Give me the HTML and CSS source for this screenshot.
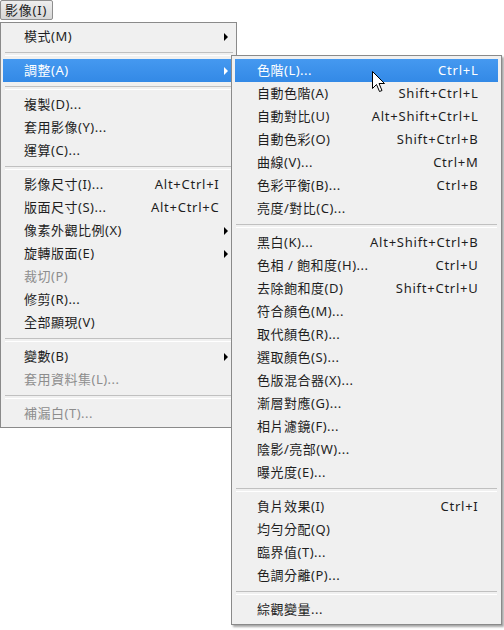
FILE: index.html
```html
<!DOCTYPE html>
<html lang="zh-Hant">
<head>
<meta charset="utf-8">
<title>影像選單</title>
<link rel="stylesheet" href="styles.css">
</head>
<body>
<div class="menubar"><span class="menubar-item">影像(I)</span></div>

<div class="menu main">
  <div class="item"><span class="label">模式(M)</span><span class="arrow-cell"><i class="arrow"></i></span></div>
  <div class="sep"></div>
  <div class="item active"><span class="label">調整(A)</span><span class="arrow-cell"><i class="arrow"></i></span></div>
  <div class="sep"></div>
  <div class="item"><span class="label">複製(D)...</span><span class="arrow-cell"></span></div>
  <div class="item"><span class="label">套用影像(Y)...</span><span class="arrow-cell"></span></div>
  <div class="item"><span class="label">運算(C)...</span><span class="arrow-cell"></span></div>
  <div class="sep"></div>
  <div class="item"><span class="label">影像尺寸(I)...</span><span class="key">Alt+Ctrl+I</span><span class="arrow-cell"></span></div>
  <div class="item"><span class="label">版面尺寸(S)...</span><span class="key">Alt+Ctrl+C</span><span class="arrow-cell"></span></div>
  <div class="item"><span class="label">像素外觀比例(X)</span><span class="arrow-cell"><i class="arrow"></i></span></div>
  <div class="item"><span class="label">旋轉版面(E)</span><span class="arrow-cell"><i class="arrow"></i></span></div>
  <div class="item disabled"><span class="label">裁切(P)</span><span class="arrow-cell"></span></div>
  <div class="item"><span class="label">修剪(R)...</span><span class="arrow-cell"></span></div>
  <div class="item"><span class="label">全部顯現(V)</span><span class="arrow-cell"></span></div>
  <div class="sep"></div>
  <div class="item"><span class="label">變數(B)</span><span class="arrow-cell"><i class="arrow"></i></span></div>
  <div class="item disabled"><span class="label">套用資料集(L)...</span><span class="arrow-cell"></span></div>
  <div class="sep"></div>
  <div class="item disabled"><span class="label">補漏白(T)...</span><span class="arrow-cell"></span></div>
</div>

<div class="menu sub">
  <div class="item active"><span class="label">色階(L)...</span><span class="key">Ctrl+L</span></div>
  <div class="item"><span class="label">自動色階(A)</span><span class="key">Shift+Ctrl+L</span></div>
  <div class="item"><span class="label">自動對比(U)</span><span class="key">Alt+Shift+Ctrl+L</span></div>
  <div class="item"><span class="label">自動色彩(O)</span><span class="key">Shift+Ctrl+B</span></div>
  <div class="item"><span class="label">曲線(V)...</span><span class="key">Ctrl+M</span></div>
  <div class="item"><span class="label">色彩平衡(B)...</span><span class="key">Ctrl+B</span></div>
  <div class="item"><span class="label">亮度/對比(C)...</span></div>
  <div class="sep"></div>
  <div class="item"><span class="label">黑白(K)...</span><span class="key">Alt+Shift+Ctrl+B</span></div>
  <div class="item"><span class="label">色相 / 飽和度(H)...</span><span class="key">Ctrl+U</span></div>
  <div class="item"><span class="label">去除飽和度(D)</span><span class="key">Shift+Ctrl+U</span></div>
  <div class="item"><span class="label">符合顏色(M)...</span></div>
  <div class="item"><span class="label">取代顏色(R)...</span></div>
  <div class="item"><span class="label">選取顏色(S)...</span></div>
  <div class="item"><span class="label">色版混合器(X)...</span></div>
  <div class="item"><span class="label">漸層對應(G)...</span></div>
  <div class="item"><span class="label">相片濾鏡(F)...</span></div>
  <div class="item"><span class="label">陰影/亮部(W)...</span></div>
  <div class="item"><span class="label">曝光度(E)...</span></div>
  <div class="sep"></div>
  <div class="item"><span class="label">負片效果(I)</span><span class="key">Ctrl+I</span></div>
  <div class="item"><span class="label">均勻分配(Q)</span></div>
  <div class="item"><span class="label">臨界值(T)...</span></div>
  <div class="item"><span class="label">色調分離(P)...</span></div>
  <div class="sep"></div>
  <div class="item"><span class="label">綜觀變量...</span></div>
</div>

<svg class="cursor" width="14" height="23" viewBox="0 0 14 23" xmlns="http://www.w3.org/2000/svg">
  <path d="M0.5 0.5 L0.5 17.5 L4.5 13.5 L7.5 20.5 L10 19.5 L7 12.5 L12.5 12.5 Z" fill="#ffffff" stroke="#000000" stroke-width="1" stroke-linejoin="miter"/>
</svg>
</body>
</html>
```

FILE: styles.css
```css
* { box-sizing: border-box; }

html, body {
  margin: 0;
  padding: 0;
  background: #ffffff;
}

body {
  position: relative;
  width: 504px;
  height: 630px;
  overflow: hidden;
  font-family: "Noto Sans", "Noto Sans CJK TC", sans-serif;
  font-size: 13px;
  letter-spacing: 0.5px;
  color: #1e1e1e;
}

.menubar {
  display: flex;
  height: 22px;
  align-items: flex-start;
}

.menubar-item {
  display: flex;
  align-items: center;
  height: 20px;
  padding: 0 5px 0 4px;
  border: 1px solid #8e8e8e;
  border-radius: 2px;
  background: linear-gradient(#eeeeee, #d6d6d6);
  line-height: 1;
  letter-spacing: 0.8px;
}

.menu {
  background: #f0f0f0;
  border: 1px solid #8a8a8a;
  padding: 2px 0;
}

.main {
  width: 237px;
}

.sub {
  position: absolute;
  left: 231px;
  top: 55px;
  width: 271px;
  padding: 3px 0;
  box-shadow: 2px 2px 2px rgba(0, 0, 0, 0.35);
}

.item {
  display: flex;
  align-items: center;
  height: 23px;
  line-height: 1;
  white-space: nowrap;
}

.main .item {
  margin: 0 2px;
  padding-left: 21px;
}

.sub .item {
  margin: 0 3px;
  padding-left: 22px;
  padding-right: 20px;
}

.label {
  flex: 1;
}

.key {
  text-align: right;
  margin-right: -0.5px;
  letter-spacing: 0.75px;
}

.arrow-cell {
  width: 15px;
  flex: none;
  display: flex;
  align-items: center;
  padding-left: 5px;
}

.arrow {
  display: block;
  width: 0;
  height: 0;
  border-left: 4px solid #000000;
  border-top: 4px solid transparent;
  border-bottom: 4px solid transparent;
}

.item.active {
  background: linear-gradient(#4599f0, #3389e6);
  color: #ffffff;
}

.item.active .arrow {
  border-left-color: #ffffff;
}

.item.disabled {
  color: #8d8d8d;
}

.sep {
  height: 11px;
  display: flex;
  align-items: center;
}

.sep::before {
  content: "";
  display: block;
  flex: 1;
  height: 2px;
  border-top: 1px solid #c0c0c0;
  border-bottom: 1px solid #ffffff;
}

.main .sep {
  margin: 0 3px 0 4px;
}

.sub .sep {
  margin: 0 4px;
}

.cursor {
  position: absolute;
  left: 372px;
  top: 71px;
}
```
